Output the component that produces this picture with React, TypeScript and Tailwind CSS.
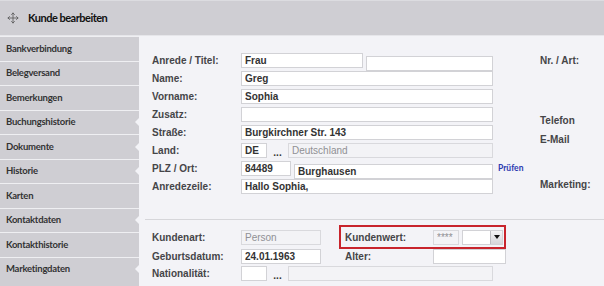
import { Move } from "lucide-react"

const narrow = "font-['Lato','Liberation_Sans',sans-serif]"
const sans = "font-['Liberation_Sans',Arial,sans-serif]"

const menu = [
  { name: "Bankverbindung", notch: false },
  { name: "Belegversand", notch: false },
  { name: "Bemerkungen", notch: false },
  { name: "Buchungshistorie", notch: true },
  { name: "Dokumente", notch: true },
  { name: "Historie", notch: true },
  { name: "Karten", notch: false },
  { name: "Kontaktdaten", notch: true },
  { name: "Kontakthistorie", notch: false },
  { name: "Marketingdaten", notch: true },
]

function Field({ w, value = "", ro = false }: { w: string; value?: string; ro?: boolean }) {
  return (
    <input
      readOnly
      value={value}
      className={`${w} h-[15px] border px-[3px] text-[10px] leading-[13px] outline-none ${sans} ${
        ro ? "border-[#d9d9dd] bg-[#f3f3f6] font-normal text-[#909094]" : "border-[#d2d2d6] bg-white font-bold text-[#333]"
      }`}
    />
  )
}

function Label({ children, w = "w-[89px]" }: { children: React.ReactNode; w?: string }) {
  return <div className={`${w} shrink-0 text-[10px] font-bold text-[#454548] ${sans}`}>{children}</div>
}

function Dots() {
  return <span className={`w-[21px] pt-[3px] text-center text-[10px] font-bold leading-[15px] text-[#333] ${sans}`}>...</span>
}

export default function App() {
  return (
    <div className="flex h-[286px] w-[604px] flex-col overflow-hidden bg-[#f3f3f7]">
      <header className="flex h-[36px] shrink-0 items-center gap-[9px] border-t border-b border-t-[#dcdce0] border-b-[#e6e6ea] bg-[#cfced3] pl-[7px]">
        <Move className="h-[12px] w-[12px] text-[#555]" strokeWidth={1.6} />
        <span className={`text-[11px] font-bold tracking-[-0.5px] text-[#111] ${narrow}`}>Kunde bearbeiten</span>
      </header>

      <div className="flex flex-1">
        <nav className="w-[139px] shrink-0 bg-[#cfced3]">
          {menu.map(item => (
            <div key={item.name} className="relative flex h-[24.5px] items-center border-t border-[#efeff2] pl-[6px]">
              <span className={`text-[9.5px] font-bold tracking-[-0.25px] text-[#333] ${narrow}`}>{item.name}</span>
              {item.notch && (
                <span className="absolute top-1/2 right-0 -translate-y-1/2 border-y-[4px] border-r-[4px] border-y-transparent border-r-[#f3f3f7]" />
              )}
            </div>
          ))}
        </nav>

        <main className="flex-1">
          <div className="flex pt-[17px] pl-[13px]">
            <div className="flex w-[388px] flex-col gap-[3px]">
              <div className="flex h-[15px] items-center">
                <Label>Anrede / Titel:</Label>
                <Field w="w-[122px]" value="Frau" />
                <div className="ml-[3px]"><Field w="w-[127px]" /></div>
              </div>
              <div className="flex h-[15px] items-center">
                <Label>Name:</Label>
                <Field w="w-[252px]" value="Greg" />
              </div>
              <div className="flex h-[15px] items-center">
                <Label>Vorname:</Label>
                <Field w="w-[252px]" value="Sophia" />
              </div>
              <div className="flex h-[15px] items-center">
                <Label>Zusatz:</Label>
                <Field w="w-[252px]" />
              </div>
              <div className="flex h-[15px] items-center">
                <Label>Straße:</Label>
                <Field w="w-[252px]" value="Burgkirchner Str. 143" />
              </div>
              <div className="flex h-[15px] items-center">
                <Label>Land:</Label>
                <Field w="w-[26px]" value="DE" />
                <Dots />
                <Field w="w-[205px]" value="Deutschland" ro />
              </div>
              <div className="flex h-[15px] items-center">
                <Label>PLZ / Ort:</Label>
                <Field w="w-[50px]" value="84489" />
                <div className="ml-[3px]"><Field w="w-[199px]" value="Burghausen" /></div>
                <a href="#" className={`ml-[5px] text-[8.5px] font-bold text-[#2b39b0] ${narrow}`}>Prüfen</a>
              </div>
              <div className="flex h-[15px] items-center">
                <Label>Anredezeile:</Label>
                <Field w="w-[252px]" value="Hallo Sophia," />
              </div>
            </div>

            <div className="flex flex-col text-[10px] leading-[15px] font-bold text-[#454548]">
              <span className={sans}>Nr. / Art:</span>
              <span className={`mt-[45px] ${sans}`}>Telefon</span>
              <span className={`mt-[4px] ${sans}`}>E-Mail</span>
              <span className={`mt-[30px] ${sans}`}>Marketing:</span>
            </div>
          </div>

          <div className="mt-[25px] ml-[6px] border-t border-[#d6d6da]" />

          <div className="flex flex-col pt-[5px] pl-[13px]">
            <div className="flex h-[24px] items-center">
              <Label>Kundenart:</Label>
              <Field w="w-[80px]" value="Person" ro />
              <div className="ml-[18px] flex h-[24px] w-[167px] items-center border-2 border-[#c8242c] pl-[4px]">
                <Label w="w-[88px]">Kundenwert:</Label>
                <Field w="w-[26px]" value="****" ro />
                <div className="ml-[3px] flex h-[15px] w-[41px] items-center justify-end border border-[#d2d2d6] bg-white">
                  <div className="flex h-[13px] w-[12px] items-center justify-center border-l border-[#bdbdc2] bg-gradient-to-b from-[#f4f4f6] to-[#d6d6da]">
                    <span className="border-x-[3px] border-t-[4px] border-x-transparent border-t-[#111]" />
                  </div>
                </div>
              </div>
            </div>
            <div className="flex h-[15px] items-center">
              <Label>Geburtsdatum:</Label>
              <Field w="w-[80px]" value="24.01.1963" />
              <div className="ml-[24px]"><Label w="w-[88px]">Alter:</Label></div>
              <Field w="w-[73px]" />
            </div>
            <div className="mt-[2px] flex h-[15px] items-center">
              <Label>Nationalität:</Label>
              <Field w="w-[26px]" />
              <Dots />
              <Field w="w-[205px]" ro />
            </div>
          </div>
        </main>
      </div>
    </div>
  )
}
